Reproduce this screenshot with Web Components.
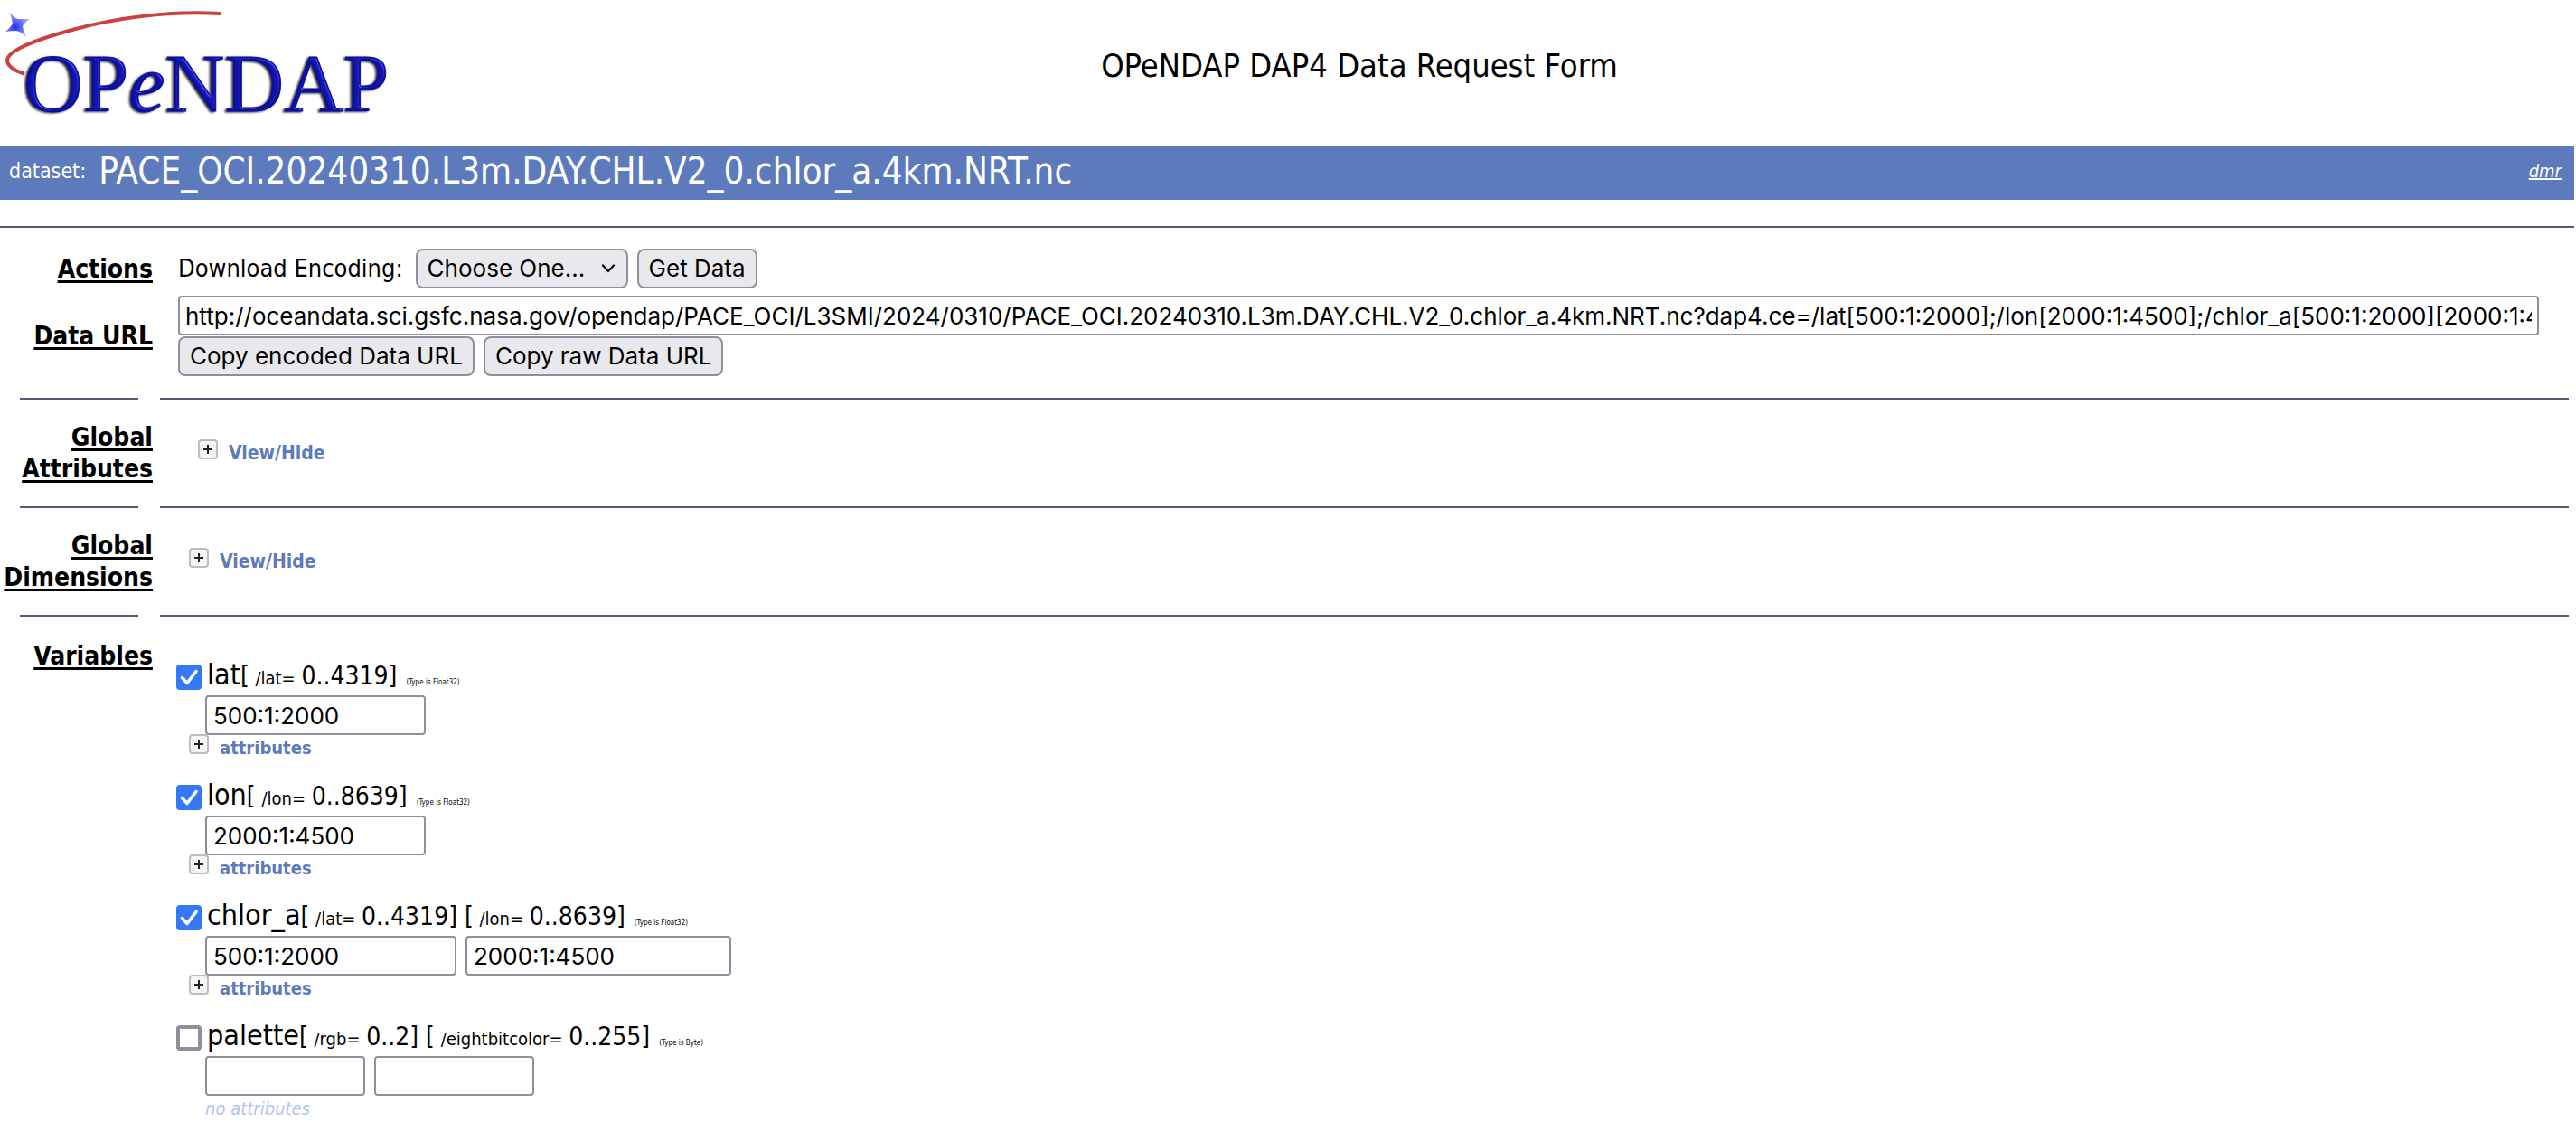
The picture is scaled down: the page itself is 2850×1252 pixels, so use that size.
<!DOCTYPE html>
<html lang="en">
<head>
<meta charset="utf-8">
<title>DAP4 Data Request Form: PACE_OCI.20240310.L3m.DAY.CHL.V2_0.chlor_a.4km.NRT.nc</title>
<style>
  body {
    margin: 0;
    background: #fff;
    color: #000;
    font: 28px/36px "DejaVu Sans Condensed", "Noto Sans", sans-serif;
    --rule: #545c78;
    --blue: #5c7abc;
    --control: #8f8f9d;
    --ui: Inter, "Liberation Sans", sans-serif;
  }
</style>
</head>
<body>
<dap-form></dap-form>

<template id="t-logo">
  <style>
    :host { display: block; }
    svg { display: block; width: 440px; height: 150px; overflow: visible; }
    text { font-family: "Liberation Serif", serif; font-size: 91px; stroke-width: 1px; }
    .e { font-style: italic; }
  </style>
  <svg viewBox="6 4 440 150" role="img" aria-label="OPeNDAP">
    <defs>
      <radialGradient id="star" cx="0.4" cy="0.6" r="0.6"><stop offset="0" stop-color="#1f2ef0"/><stop offset="1" stop-color="#a9b8fb"/></radialGradient>
      <filter id="bevel" x="-5%" y="-10%" width="110%" height="120%" color-interpolation-filters="sRGB">
        <feGaussianBlur in="SourceAlpha" stdDeviation="1" result="a"/>
        <feSpecularLighting in="a" surfaceScale="3" specularConstant="0.8" specularExponent="24" lighting-color="#8f9cff" result="s"><feDistantLight azimuth="315" elevation="40"/></feSpecularLighting>
        <feComposite in="s" in2="SourceAlpha" operator="in" result="s"/>
        <feComposite in="SourceGraphic" in2="s" operator="arithmetic" k2="1" k3="0.6" result="lit"/>
        <feOffset in="a" dx="-2" dy="1" result="sh"/>
        <feFlood flood-color="#333"/>
        <feComposite in2="sh" operator="in" result="sh"/>
        <feMerge><feMergeNode in="sh"/><feMergeNode in="lit"/></feMerge>
      </filter>
    </defs>
    <path d="M10 13 Q16 20 20 21 Q27 21 33 21 Q27 25 25 29 Q26 35 29 41 Q23 35 18 34 Q12 34 6 35 Q12 30 14 26 Q13 19 10 13 Z" fill="url(#star)"/>
    <path d="M243 15 C190 12 130 19 80 33 C35 45 8 57 8 67 C8 72 15 78 25 81" fill="none" stroke="#c8433e" stroke-width="4" stroke-linecap="square"/>
    <text x="26" y="123" fill="#0d0fa0" stroke="#0d0fa0" filter="url(#bevel)">OP<tspan class="e">e</tspan>NDAP</text>
  </svg>
</template>

<template id="t-header">
  <style>
    :host { display: block; }
    header { display: grid; grid-template-columns: 440px 1fr; align-items: start; height: 162px; box-sizing: border-box; padding: 4px 288px 0 6px; }
    h1 { margin: 47px 0 0; font-size: 36px; line-height: 44px; font-weight: 400; text-align: center; }
  </style>
  <header><dap-logo></dap-logo><h1><slot></slot></h1></header>
</template>

<template id="t-banner">
  <style>
    :host { display: flex; align-items: center; gap: 14px; margin-right: 2px; padding: 3px 14px 8px 10px; background: var(--blue); color: #fff; line-height: 24px; font-size: 23px; }
    .name { flex: 1; font-size: 40px; line-height: 48px; }
    a { color: inherit; font-size: 20px; font-style: italic; }
  </style>
  <span>dataset:</span><span class="name"><slot></slot></span><a href="#dmr">dmr</a>
</template>

<template id="t-row">
  <style>
    :host { display: grid; grid-template-columns: 169px 1fr; column-gap: 28px; align-items: center; }
    :host([top]) { align-items: start; }
    h2 { margin: 0; font-size: 28px; line-height: 35px; font-weight: 700; text-align: right; text-decoration: underline; text-decoration-thickness: 3px; text-underline-offset: 3px; }
  </style>
  <h2></h2>
  <div><slot></slot></div>
</template>

<template id="t-rule">
  <style>
    :host { display: grid; grid-template-columns: 131px 1fr; column-gap: 24px; padding: 0 8px 0 22px; }
    :host([full]) { grid-template-columns: 1fr; padding: 0 2px 0 0; margin-top: 29px; }
    :host([full]) hr + hr { display: none; }
    hr { margin: 0; border: 0; height: 2px; width: 100%; background: var(--rule); }
  </style>
  <hr><hr>
</template>

<template id="t-toggle">
  <style>
    :host { display: flex; font-size: 20px; }
    button { display: flex; align-items: flex-start; gap: 12px; margin: 0; padding: 0; border: 0; background: none; color: var(--blue); font: inherit; line-height: 24px; font-weight: 700; }
    svg { width: 22px; height: 22px; }
    span { padding-top: 3px; }
  </style>
  <button type="button"><svg viewBox="0 0 22 22" aria-hidden="true"><rect x="1" y="1" width="20" height="20" rx="3" fill="#f6f6f6" stroke="#bdbdbd" stroke-width="2"/><path d="M6 11H16M11 6V16" stroke="#222" stroke-width="2"/></svg><span><slot></slot></span></button>
</template>

<template id="t-variable">
  <style>
    :host { display: block; height: 133px; }
    .head { display: flex; align-items: center; height: 38px; margin-left: -2px; }
    input { box-sizing: border-box; margin: 0; }
    input[type=checkbox] { appearance: none; flex: none; width: 28px; height: 28px; border: 4px solid var(--control); border-radius: 4px; background: #fff; }
    input[type=checkbox]:checked { border: 0; background: #3478f6; }
    .box { display: grid; flex: none; margin-right: 6px; }
    .box > * { grid-area: 1 / 1; }
    .box svg { width: 28px; height: 28px; pointer-events: none; }
    .box input:not(:checked) + svg { display: none; }
    label, .dims { white-space: pre; line-height: 38px; }
    .line { display: flex; align-items: baseline; padding-top: 2px; }
    label { font-size: 32px; }
    .dims small { font-size: 20px; margin: 0 1px; }
    .type { font-size: 8px; margin-left: 10px; }
    .fields { display: flex; gap: 10px; margin: 1px 0 0 30px; }
    .fields input { height: 44px; padding: 0 7px; border: 2px solid var(--control); border-radius: 4px; background: #fff; color: #000; font: 26px/32px var(--ui); }
    dap-toggle { margin: -1px 0 0 12px; }
    .none { margin-left: 30px; color: #b4c5ea; font-size: 20px; line-height: 24px; font-style: italic; padding-top: 2px; }
  </style>
  <div class="head">
    <span class="box"><input type="checkbox" id="use"><svg viewBox="0 0 28 28" aria-hidden="true"><path d="M6.500 14.500L12 20.500L22 7.500" fill="none" stroke="#fff" stroke-width="3.500" stroke-linecap="round" stroke-linejoin="round"/></svg></span>
    <div class="line"><label for="use"></label><span class="dims"></span><span class="type"></span></div>
  </div>
  <div class="fields"></div>
</template>

<template id="t-form">
  <style>
    :host { display: block; overflow-x: clip; }
    form { margin: 0; }
    .controls { display: flex; align-items: center; gap: 10px; }
    .controls label { margin-right: 4px; font-size: 27px; }
    select, button, .url { box-sizing: border-box; height: 44px; margin: 0; border: 2px solid var(--control); color: #000; font: 26px/32px var(--ui); }
    button, select { border-radius: 8px; background: #e9e9ed; padding: 0 11px; }
    .pick { display: grid; align-items: center; }
    .pick > * { grid-area: 1 / 1; }
    select { appearance: none; width: 235px; }
    .pick svg { width: 16px; height: 10px; justify-self: end; margin-right: 14px; pointer-events: none; }
    .url { display: block; width: calc(100% - 41px); border-radius: 4px; background: #fff; padding: 0 6px; }
    .one { padding: 23px 0 8px; }
    .two { padding-bottom: 24px; }
    .stack { display: grid; gap: 1px; }
    .section { padding: 24px 0; }
    .section dap-toggle { font-size: 21px; margin-bottom: 4px; }
    .attrs { margin-left: 22px; }
    .dims { margin-left: 12px; }
    .vars { padding-top: 26px; }
    .list { padding-top: 22px; }
  </style>
  <dap-header>OPeNDAP DAP4 Data Request Form</dap-header>
  <dap-banner>PACE_OCI.20240310.L3m.DAY.CHL.V2_0.chlor_a.4km.NRT.nc</dap-banner>
  <dap-rule full></dap-rule>
  <form>
    <dap-row class="one" label="Actions">
      <div class="controls">
        <label for="enc">Download Encoding:</label>
        <span class="pick"><select id="enc"><option>Choose One...</option></select><svg viewBox="0 0 16 10" aria-hidden="true"><path d="M2 1.500L8 8L14 1.500" fill="none" stroke="#000" stroke-width="2.200" stroke-linecap="round"/></svg></span>
        <button type="button">Get Data</button>
      </div>
    </dap-row>
    <dap-row class="two" label="Data URL">
      <div class="stack">
        <input class="url" type="text" aria-label="Data URL" value="http://oceandata.sci.gsfc.nasa.gov/opendap/PACE_OCI/L3SMI/2024/0310/PACE_OCI.20240310.L3m.DAY.CHL.V2_0.chlor_a.4km.NRT.nc?dap4.ce=/lat[500:1:2000];/lon[2000:1:4500];/chlor_a[500:1:2000][2000:1:4500]">
        <div class="controls"><button type="button">Copy encoded Data URL</button><button type="button">Copy raw Data URL</button></div>
      </div>
    </dap-row>
    <dap-rule></dap-rule>
    <dap-row class="section" label="Global Attributes"><dap-toggle class="attrs">View/Hide</dap-toggle></dap-row>
    <dap-rule></dap-rule>
    <dap-row class="section" label="Global Dimensions"><dap-toggle class="dims">View/Hide</dap-toggle></dap-row>
    <dap-rule></dap-rule>
    <dap-row class="vars" top label="Variables">
      <div class="list">
        <dap-variable name="lat" checked type="Float32" dims="lat:4319" values="500:1:2000" widths="244"></dap-variable>
        <dap-variable name="lon" checked type="Float32" dims="lon:8639" values="2000:1:4500" widths="244"></dap-variable>
        <dap-variable name="chlor_a" checked type="Float32" dims="lat:4319,lon:8639" values="500:1:2000,2000:1:4500" widths="278,294"></dap-variable>
        <dap-variable name="palette" type="Byte" dims="rgb:2,eightbitcolor:255" values="," widths="177,177" bare></dap-variable>
      </div>
    </dap-row>
  </form>
</template>

<script>
  class DapElement extends HTMLElement {
    constructor() {
      super();
      const t = document.getElementById(this.constructor.template);
      this.attachShadow({ mode: 'open' }).append(t.content.cloneNode(true));
    }
  }
  class DapLogo extends DapElement { static template = 't-logo'; }
  class DapHeader extends DapElement { static template = 't-header'; }
  class DapBanner extends DapElement { static template = 't-banner'; }
  class DapRule extends DapElement { static template = 't-rule'; }
  class DapToggle extends DapElement { static template = 't-toggle'; }
  class DapRow extends DapElement {
    static template = 't-row';
    connectedCallback() { this.shadowRoot.querySelector('h2').textContent = this.getAttribute('label'); }
  }
  class DapVariable extends DapElement {
    static template = 't-variable';
    connectedCallback() {
      const root = this.shadowRoot, get = n => this.getAttribute(n);
      root.querySelector('#use').checked = this.hasAttribute('checked');
      root.querySelector('label').textContent = get('name');
      root.querySelector('.type').textContent = `(Type is ${get('type')})`;
      const dims = get('dims').split(',').map(d => d.split(':'));
      root.querySelector('.dims').innerHTML = dims.map(([n, max]) => `[<small> /${n}= </small>0..${max}]`).join(' ');
      const widths = get('widths').split(',');
      get('values').split(',').forEach((v, i) => {
        const input = document.createElement('input');
        input.type = 'text';
        input.value = v;
        input.style.width = widths[i] + 'px';
        input.setAttribute('aria-label', `${get('name')} ${dims[i][0]} range`);
        root.querySelector('.fields').append(input);
      });
      const foot = document.createElement(this.hasAttribute('bare') ? 'div' : 'dap-toggle');
      foot.textContent = this.hasAttribute('bare') ? 'no attributes' : 'attributes';
      if (this.hasAttribute('bare')) foot.className = 'none';
      root.append(foot);
    }
  }
  class DapForm extends DapElement { static template = 't-form'; }
  customElements.define('dap-logo', DapLogo);
  customElements.define('dap-header', DapHeader);
  customElements.define('dap-banner', DapBanner);
  customElements.define('dap-rule', DapRule);
  customElements.define('dap-toggle', DapToggle);
  customElements.define('dap-row', DapRow);
  customElements.define('dap-variable', DapVariable);
  customElements.define('dap-form', DapForm);
</script>
</body>
</html>
